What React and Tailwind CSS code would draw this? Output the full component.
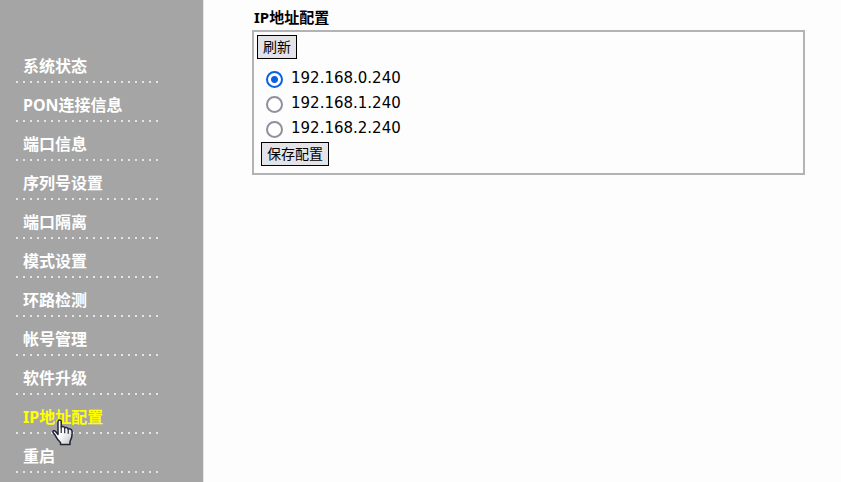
import { useState } from 'react';

const MENU = [
  '系统状态',
  'PON连接信息',
  '端口信息',
  '序列号设置',
  '端口隔离',
  '模式设置',
  '环路检测',
  '帐号管理',
  '软件升级',
  'IP地址配置',
  '重启',
];

const ADDRESSES = ['192.168.0.240', '192.168.1.240', '192.168.2.240'];

const HandCursor = () => (
  <svg
    viewBox="0 0 22 27"
    className="absolute left-9 top-6 z-10 h-[27px] w-[22px] pointer-events-none"
    aria-hidden="true"
  >
    <defs>
      <linearGradient id="hand" x1="0" y1="0" x2="1" y2="1">
        <stop offset="0.5" stopColor="#fff" />
        <stop offset="1" stopColor="#c0c0c0" />
      </linearGradient>
    </defs>
    <path
      d="M6 15.500V2.600C6 .4 9.200 .4 9.200 2.600V8.500C9.800 7 12.600 7.300 12.700 9.200C13.400 7.900 16 8.300 16.200 10.400C17 9.400 19.600 9.800 20 12C20.500 16 20 19 18 22.500V25.500H8.500V23.500C6 21.500 4.300 18.500 3.200 16.300L1 13.500C.3 11.800 2.300 11 3.800 12.700Z"
      fill="url(#hand)"
      stroke="#22243a"
      strokeWidth="1.500"
      strokeLinejoin="round"
    />
    <path d="M9.200 8.500v5.500M12.700 9.200v5M16.200 10.400v4.300" stroke="#22243a" strokeWidth="1.200" fill="none" />
  </svg>
);

const App = () => {
  const [page, setPage] = useState('IP地址配置');
  const [address, setAddress] = useState(ADDRESSES[0]);

  return (
    <div className="flex h-screen overflow-hidden bg-[#fdfdfd] font-['DejaVu_Sans','Noto_Sans_CJK_SC',sans-serif] text-black">
      <nav className="w-[203px] shrink-0 bg-[#a5a5a5] pl-4 pt-11 font-['Noto_Sans','Noto_Sans_CJK_SC',sans-serif]">
        <ul className="w-[143px]">
          {MENU.map((item) => (
            <li key={item} className="relative flex h-[39px] flex-col justify-between">
              <a
                href="#"
                onClick={() => setPage(item)}
                className={`block pl-[7px] pt-[10px] text-[16px] leading-6 font-bold whitespace-nowrap ${
                  item === page ? 'text-[#ffff00]' : 'text-white'
                }`}
              >
                {item}
              </a>
              <div className="h-[2px] bg-[repeating-linear-gradient(to_right,#e4e4e4_0_2px,transparent_2px_7px)]" />
              {item === 'IP地址配置' && <HandCursor />}
            </li>
          ))}
        </ul>
      </nav>

      <main className="min-w-0 flex-1 border-l border-[#e6e6e6] pl-12 pr-9 pt-[7px]">
        <h1 className="pl-[2px] font-['Noto_Sans','Noto_Sans_CJK_SC',sans-serif] text-[15px] leading-5 font-bold">
          IP地址配置
        </h1>
        <form
          onSubmit={(e) => e.preventDefault()}
          className="mt-[3px] border-2 border-[#b3b3b3] px-[3px] pt-[3px] pb-[7px]"
        >
          <button
            type="button"
            className="block h-6 border border-black bg-[#e3e3e8] px-[5px] text-[14px] leading-5"
          >
            刷新
          </button>
          <div className="pt-[6px] pb-[2px] pl-[9px]">
            {ADDRESSES.map((ip) => (
              <label key={ip} className="flex h-[25px] items-center gap-2 text-[15px] leading-6">
                <input
                  type="radio"
                  name="ip"
                  value={ip}
                  checked={address === ip}
                  onChange={() => setAddress(ip)}
                  className="mt-[3px] h-[17px] w-[17px] appearance-none rounded-full border-2 border-[#8f8f9d] bg-white checked:border-[#0a60df] checked:bg-[radial-gradient(circle,#0a60df_0_3px,white_4px)]"
                />
                {ip}
              </label>
            ))}
          </div>
          <button
            type="submit"
            className="ml-1 block h-6 border border-black bg-[#e3e3e8] px-[5px] text-[14px] leading-5"
          >
            保存配置
          </button>
        </form>
      </main>
    </div>
  );
};

export default App;
